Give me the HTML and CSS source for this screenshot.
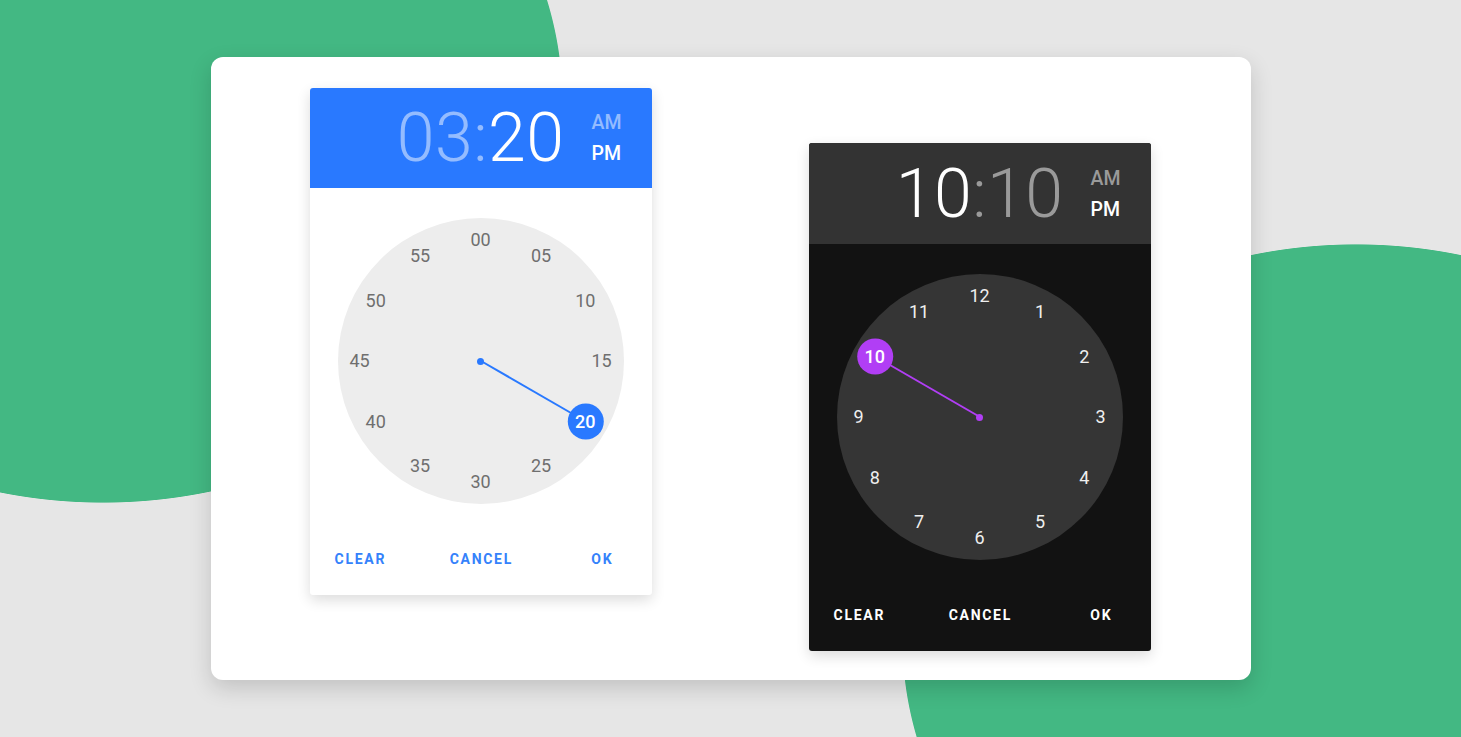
FILE: index.html
```html
<!DOCTYPE html>
<html lang="en">
<head>
    <meta charset="UTF-8">
    <meta name="viewport" content="width=device-width, initial-scale=1.0">
    <title>Time Picker</title>
    <link rel="stylesheet" href="styles.css">
</head>
<body>
    <main class="card">
        <!-- light picker, minutes view -->
        <div class="picker picker-light">
            <div class="picker-header">
                <div class="time"><span class="faded">03</span><span class="faded">:</span><span>20</span></div>
                <div class="ampm">
                    <span class="faded">AM</span>
                    <span>PM</span>
                </div>
            </div>
            <div class="picker-body">
                <div class="clock">
                    <div class="hand" style="--i:4"></div>
                    <div class="dot"></div>
                    <span class="num" style="--i:0">00</span>
                    <span class="num" style="--i:1">05</span>
                    <span class="num" style="--i:2">10</span>
                    <span class="num" style="--i:3">15</span>
                    <span class="num selected" style="--i:4">20</span>
                    <span class="num" style="--i:5">25</span>
                    <span class="num" style="--i:6">30</span>
                    <span class="num" style="--i:7">35</span>
                    <span class="num" style="--i:8">40</span>
                    <span class="num" style="--i:9">45</span>
                    <span class="num" style="--i:10">50</span>
                    <span class="num" style="--i:11">55</span>
                </div>
            </div>
            <div class="picker-actions">
                <button>Clear</button>
                <button>Cancel</button>
                <button>Ok</button>
            </div>
        </div>

        <!-- dark picker, hours view -->
        <div class="picker picker-dark">
            <div class="picker-header">
                <div class="time"><span>10</span><span class="faded">:</span><span class="faded">10</span></div>
                <div class="ampm">
                    <span class="faded">AM</span>
                    <span>PM</span>
                </div>
            </div>
            <div class="picker-body">
                <div class="clock">
                    <div class="hand" style="--i:10"></div>
                    <div class="dot"></div>
                    <span class="num" style="--i:0">12</span>
                    <span class="num" style="--i:1">1</span>
                    <span class="num" style="--i:2">2</span>
                    <span class="num" style="--i:3">3</span>
                    <span class="num" style="--i:4">4</span>
                    <span class="num" style="--i:5">5</span>
                    <span class="num" style="--i:6">6</span>
                    <span class="num" style="--i:7">7</span>
                    <span class="num" style="--i:8">8</span>
                    <span class="num" style="--i:9">9</span>
                    <span class="num selected" style="--i:10">10</span>
                    <span class="num" style="--i:11">11</span>
                </div>
            </div>
            <div class="picker-actions">
                <button>Clear</button>
                <button>Cancel</button>
                <button>Ok</button>
            </div>
        </div>
    </main>
</body>
</html>
```

FILE: styles.css
```css
* {
    box-sizing: border-box;
}
html, body {
    height: 100%;
}
body {
    margin: 0;
    font-family: Roboto, 'Liberation Sans', sans-serif;
    /* the two green shapes behind the card */
    background:
        radial-gradient(460px 400px at 103px 103px, #43b883 99.8%, rgba(67, 184, 131, 0) 100%),
        radial-gradient(454px 395px at 1356px 639px, #43b883 99.8%, rgba(67, 184, 131, 0) 100%),
        #e6e6e6;
    display: flex;
    justify-content: center;
    align-items: center;
    overflow: hidden;
}

.card {
    width: 1040px;
    height: 623px;
    padding: 31px 100px 29px 99px;
    background: #fff;
    border-radius: 12px;
    box-shadow: 0 8px 22px rgba(0, 0, 0, 0.16);
    display: flex;
    justify-content: space-between;
}

.picker {
    width: 342px;
    border-radius: 3px;
    overflow: hidden;
    box-shadow: 0 5px 14px rgba(0, 0, 0, 0.14);
}
.picker-light {
    align-self: flex-start;
    background: #fff;
}
.picker-dark {
    align-self: flex-end;
    background: #121212;
}

.picker-header {
    height: 100px;
    display: flex;
    justify-content: flex-end;
    align-items: center;
    gap: 27px;
    padding-right: 30px;
    color: #fff;
}
.picker-light .picker-header {
    background: #2979ff;
}
.picker-dark .picker-header {
    background: #333;
    height: 101px;
}
.time {
    font-size: 68px;
    font-weight: 300;
    line-height: 1;
    letter-spacing: 0.5px;
}
.ampm {
    display: flex;
    flex-direction: column;
    font-size: 19.5px;
    font-weight: 500;
    line-height: 31px;
}
.picker-light .faded {
    color: rgba(255, 255, 255, 0.5);
}
.picker-dark .faded {
    color: #9a9a9a;
}

.picker-body {
    padding-top: 30px;
    display: flex;
    justify-content: center;
}
.clock {
    position: relative;
    width: 286px;
    height: 286px;
    border-radius: 50%;
}
.picker-light .clock {
    background: #ededed;
    color: #6f6f6f;
}
.picker-dark .clock {
    background: #353535;
    color: #efefef;
}

/* numbers sit on a 121px ring around the centre */
.num {
    position: absolute;
    left: 50%;
    top: 50%;
    width: 36px;
    height: 36px;
    line-height: 36px;
    text-align: center;
    font-size: 18px;
    transform-origin: 0 0;
    transform: rotate(calc(var(--i) * 30deg)) translateY(-121px) rotate(calc(var(--i) * -30deg)) translate(-50%, -50%);
}
.num.selected {
    border-radius: 50%;
    color: #fff;
    font-weight: 500;
}
.picker-light .num.selected {
    background: #2979ff;
}
.picker-dark .num.selected {
    background: #b13ef5;
}

.hand {
    position: absolute;
    left: 50%;
    bottom: 50%;
    width: 2px;
    height: 121px;
    margin-left: -1px;
    transform-origin: 50% 100%;
    transform: rotate(calc(var(--i) * 30deg));
}
.dot {
    position: absolute;
    left: 50%;
    top: 50%;
    width: 7px;
    height: 7px;
    margin: -3.5px 0 0 -3.5px;
    border-radius: 50%;
}
.picker-light .hand,
.picker-light .dot {
    background: #2979ff;
}
.picker-dark .hand,
.picker-dark .dot {
    background: #b13ef5;
}

.picker-actions {
    display: flex;
    justify-content: center;
    gap: 21px;
    padding: 37px 0 18px;
}
.picker-actions button {
    width: 100px;
    flex-shrink: 0;
    background: none;
    border: none;
    padding: 0;
    text-align: center;
    font-family: inherit;
    font-size: 14px;
    font-weight: 700;
    letter-spacing: 1.7px;
    text-indent: 1.7px;
    line-height: 36px;
    text-transform: uppercase;
    cursor: pointer;
}
.picker-light .picker-actions button {
    color: #3582fb;
}
.picker-dark .picker-actions button {
    color: #fff;
}
```
